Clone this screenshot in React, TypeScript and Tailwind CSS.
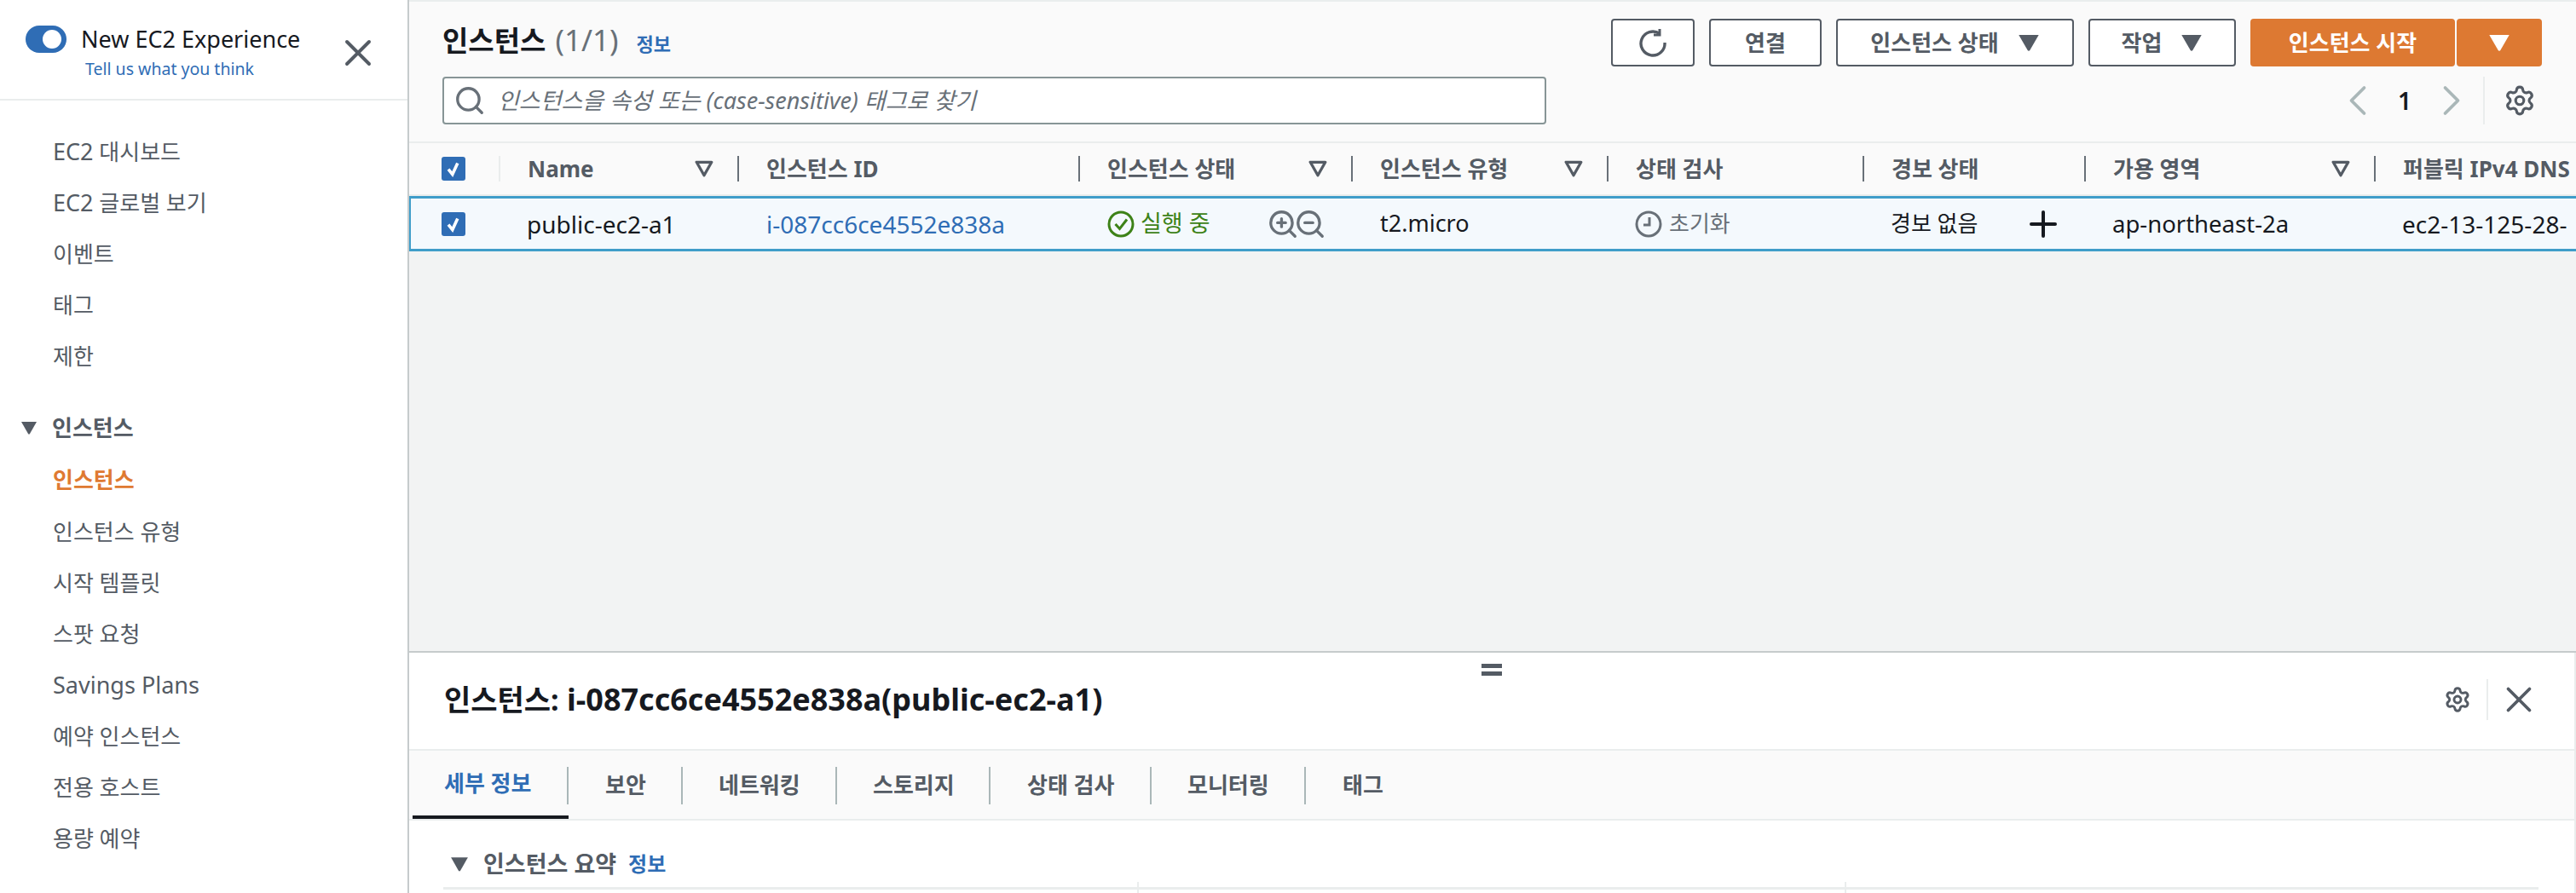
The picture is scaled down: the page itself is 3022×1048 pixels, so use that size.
import type { ReactNode } from "react";
import { Search, Settings, ZoomIn, ZoomOut, X, ChevronLeft, ChevronRight, Plus } from "lucide-react";

const font = "font-['Noto_Sans','Noto_Sans_CJK_KR',sans-serif]";

const Caret = ({ className = "" }: { className?: string }) => (
  <svg viewBox="0 0 20 20" className={className} fill="currentColor">
    <path d="M1 3h18l-8 14a1.2 1.2 0 0 1-2 0z" />
  </svg>
);

const SortIcon = () => (
  <svg viewBox="0 0 20 20" className="w-[22px] h-[22px] text-[#545b64]" fill="none" stroke="currentColor" strokeWidth="3" strokeLinejoin="round">
    <path d="M2 3h16l-8 14z" />
  </svg>
);

const Checkbox = () => (
  <div className="w-[28px] h-[28px] rounded-[3px] bg-[#2f6db5] flex items-center justify-center">
    <svg viewBox="0 0 20 20" className="w-[24px] h-[24px]" fill="none" stroke="white" strokeWidth="3">
      <path d="M5 10.5l4 5 5-11" />
    </svg>
  </div>
);

const NavItem = ({ children }: { children: ReactNode }) => (
  <div className="h-[60px] pl-[62px] flex items-center whitespace-pre">{children}</div>
);

const HeaderCell = ({ label, sort, first }: { label: string; sort?: boolean; first?: boolean }) => (
  <div className="flex items-center h-full min-w-0">
    <span className={`w-[2px] h-[30px] shrink-0 ${first ? "bg-[#eaeded]" : "bg-[#687078]"}`} />
    <span className="ml-[32px] whitespace-nowrap">{label}</span>
    {sort && (
      <span className="ml-auto mr-[28px] flex">
        <SortIcon />
      </span>
    )}
  </div>
);

const ActionButton = ({ label, caret, width }: { label: string; caret?: boolean; width: string }) => (
  <button className={`${width} h-[56px] border-2 border-[#545b64] rounded-[4px] bg-white text-[#545b64] font-bold text-[26px] flex items-center justify-center gap-[22px]`}>
    <span>{label}</span>
    {caret && <Caret className="w-[26px] h-[26px]" />}
  </button>
);

const tabs = [
  { label: "세부 정보", w: "w-[183px] pl-[37px]" },
  { label: "보안", w: "w-[134px] pl-[43px]" },
  { label: "네트워킹", w: "w-[181px] pl-[42px]" },
  { label: "스토리지", w: "w-[180px] pl-[42px]" },
  { label: "상태 검사", w: "w-[189px] pl-[43px]" },
  { label: "모니터링", w: "w-[181px] pl-[42px]" },
  { label: "태그", w: "w-[130px] pl-[43px]" },
];

export default function App() {
  return (
    <div className={`${font} flex w-[3022px] h-[1048px] overflow-hidden bg-white text-[#16191f]`}>
      {/* left nav */}
      <aside className="w-[480px] shrink-0 border-r-2 border-[#c6cbcc] bg-white">
        <div className="h-[118px] border-b-2 border-[#eaeded] flex pl-[30px] pr-[32px]">
          <div className="mt-[30px] w-[48px] h-[32px] rounded-full bg-[#2f6db5] relative shrink-0">
            <div className="absolute left-[20px] top-[5px] w-[22px] h-[22px] rounded-full bg-white" />
          </div>
          <div className="ml-[17px] pt-[24px]">
            <div className="text-[27px] leading-[44px] text-[#16191f]">New EC2 Experience</div>
            <div className="ml-[5px] text-[19.5px] leading-[26px] text-[#2f6db5]">Tell us what you think</div>
          </div>
          <X className="ml-auto mt-[36px] w-[52px] h-[52px] text-[#545b64]" strokeWidth={1.8} />
        </div>
        <nav className="pt-[30px] text-[#545b64] text-[26px]">
          <NavItem><span className="text-[27px]">EC2</span> 대시보드</NavItem>
          <NavItem><span className="text-[27px]">EC2</span> 글로벌 보기</NavItem>
          <NavItem>이벤트</NavItem>
          <NavItem>태그</NavItem>
          <NavItem>제한</NavItem>
          <div className="mt-[24px] h-[60px] flex items-center pl-[24px] font-bold">
            <Caret className="w-[20px] h-[20px] mr-[17px]" />
            인스턴스
          </div>
          <div className="h-[62px] pl-[62px] flex items-center font-bold text-[#df7a32]">인스턴스</div>
          <NavItem>인스턴스 유형</NavItem>
          <NavItem>시작 템플릿</NavItem>
          <NavItem>스팟 요청</NavItem>
          <NavItem><span className="text-[27px]">Savings Plans</span></NavItem>
          <NavItem>예약 인스턴스</NavItem>
          <NavItem>전용 호스트</NavItem>
          <NavItem>용량 예약</NavItem>
        </nav>
      </aside>

      <main className="flex-1 min-w-0 flex flex-col">
        {/* instances list */}
        <section className="h-[766px] shrink-0 bg-[#f2f3f3] border-b-2 border-[#c6cbcc] flex flex-col">
          <div className="h-[168px] shrink-0 bg-[#fafafa] border-t-2 border-[#eaeded] border-b-2 border-b-[#eaeded] pl-[39px] pr-[40px]">
            <div className="flex items-center justify-between pt-[20px]">
              <div className="flex items-baseline -mt-[6px]">
                <h1 className="text-[33px] font-bold">인스턴스</h1>
                <span className="ml-[11px] text-[35px] text-[#687078]">(1/1)</span>
                <span className="ml-[21px] text-[22px] font-bold text-[#2f6db5]">정보</span>
              </div>
              <div className="flex gap-[17px]">
                <button className="w-[98px] h-[56px] border-2 border-[#545b64] rounded-[4px] bg-white flex items-center justify-center">
                  <svg viewBox="0 0 34 34" className="w-[34px] h-[34px] text-[#545b64]" fill="none" stroke="currentColor" strokeWidth="3.4">
                    <path d="M25 6.5A14 14 0 1 0 31 17" />
                    <path d="M25 1v7h-7" strokeWidth="3" />
                  </svg>
                </button>
                <ActionButton label="연결" width="w-[132px]" />
                <ActionButton label="인스턴스 상태" caret width="w-[279px]" />
                <ActionButton label="작업" caret width="w-[173px]" />
                <div className="flex gap-[2px]">
                  <button className="w-[240px] h-[56px] rounded-[4px] bg-[#dd7932] text-white font-bold text-[26px]">인스턴스 시작</button>
                  <button className="w-[100px] h-[56px] rounded-[4px] bg-[#dd7932] text-white flex items-center justify-center">
                    <Caret className="w-[26px] h-[26px]" />
                  </button>
                </div>
              </div>
            </div>
            <div className="flex items-center justify-between mt-[12px]">
              <div className="w-[1295px] h-[56px] bg-white border-2 border-[#879596] rounded-[4px] flex items-center pl-[11px]">
                <Search className="w-[38px] h-[38px] text-[#687078]" strokeWidth={2.1} />
                <span className="ml-[14px] italic text-[27px] text-[#687078]">인스턴스을 속성 또는 (case-sensitive) 태그로 찾기</span>
              </div>
              <div className="flex items-center h-[56px]">
                <ChevronLeft className="w-[60px] h-[60px] text-[#aab7b8]" strokeWidth={1.5} />
                <span className="mx-[17px] w-[16px] text-center text-[28px] font-semibold">1</span>
                <ChevronRight className="w-[60px] h-[60px] text-[#aab7b8]" strokeWidth={1.5} />
                <span className="ml-[7px] w-[2px] h-[56px] bg-[#eaeded]" />
                <Settings className="ml-[22px] mr-[7px] w-[38px] h-[38px] text-[#545b64]" strokeWidth={2} />
              </div>
            </div>
          </div>

          {/* table */}
          <div className="grid grid-cols-[105px_280px_400px_320px_300px_300px_260px_340px_237px] h-[60px] items-center bg-[#fafafa] text-[#545b64] font-bold text-[26px] overflow-hidden">
            <div className="pl-[38px]"><Checkbox /></div>
            <HeaderCell label="Name" sort first />
            <HeaderCell label="인스턴스 ID" />
            <HeaderCell label="인스턴스 상태" sort />
            <HeaderCell label="인스턴스 유형" sort />
            <HeaderCell label="상태 검사" />
            <HeaderCell label="경보 상태" />
            <HeaderCell label="가용 영역" sort />
            <HeaderCell label="퍼블릭 IPv4 DNS" />
          </div>
          <div className="h-[2px] bg-[#eaeded]" />
          <div className="grid grid-cols-[103px_280px_400px_320px_300px_300px_260px_340px_237px] h-[65px] items-center bg-[#f4f9fd] border-y-[3px] border-[#3f9dc9] border-l-2 text-[28px] overflow-hidden whitespace-nowrap">
            <div className="pl-[36px]"><Checkbox /></div>
            <div className="pl-[33px]">public-ec2-a1</div>
            <div className="pl-[34px] text-[#2f6db5]">i-087cc6ce4552e838a</div>
            <div className="pl-[34px] flex items-center">
              <svg viewBox="0 0 32 32" className="w-[32px] h-[32px] text-[#3d8217]" fill="none" stroke="currentColor" strokeWidth="3">
                <circle cx="16" cy="16" r="14" />
                <path d="M9.5 16l5 5.5 8.5-11" />
              </svg>
              <span className="ml-[7px] text-[27px] text-[#3d8217]">실행 중</span>
              <span className="ml-auto mr-[29px] flex text-[#687078]">
                <ZoomIn className="w-[38px] h-[38px] -mr-[6px]" strokeWidth={2.1} />
                <ZoomOut className="w-[38px] h-[38px]" strokeWidth={2.1} />
              </span>
            </div>
            <div className="pl-[34px] text-[27px]">t2.micro</div>
            <div className="pl-[33px] flex items-center text-[#687078]">
              <svg viewBox="0 0 32 32" className="w-[32px] h-[32px]" fill="none" stroke="currentColor" strokeWidth="3">
                <circle cx="16" cy="16" r="14" />
                <path d="M17 8v9h-7" />
              </svg>
              <span className="ml-[8px] text-[26px]">초기화</span>
            </div>
            <div className="pl-[33px] flex items-center text-[26px]">
              경보 없음
              <Plus className="ml-[53px] w-[48px] h-[48px]" strokeWidth={2} />
            </div>
            <div className="pl-[33px] text-[27.5px]">ap-northeast-2a</div>
            <div className="pl-[33px]">ec2-13-125-28-</div>
          </div>
        </section>

        {/* details panel */}
        <section className="flex-1 min-h-0 bg-white border-r-2 border-[#eaeded] relative">
          <div className="absolute left-[1258px] top-[13px] w-[24px] h-[14px] border-y-[5px] border-[#545b64]" />
          <div className="h-[115px] border-b-2 border-[#eaeded] flex items-center pl-[41px] pr-[40px] pb-[3px]">
            <h2 className="text-[36px] font-bold">
              <span className="text-[34px]">인스턴스:</span> i-087cc6ce4552e838a(public-ec2-a1)
            </h2>
            <Settings className="ml-auto w-[32px] h-[32px] text-[#545b64]" strokeWidth={2.2} />
            <span className="ml-[18px] w-[2px] h-[48px] bg-[#eaeded]" />
            <X className="ml-[11px] w-[50px] h-[50px] text-[#545b64]" strokeWidth={1.8} />
          </div>
          <div className="h-[82px] bg-[#fafafa] border-b-2 border-[#eaeded] flex pl-[4px]">
            {tabs.map((tab, i) => (
              <div key={tab.label} className={`${tab.w} h-[80px] flex items-center font-bold text-[26px] relative ${i === 0 ? "text-[#2f6db5] border-b-[4px] border-[#16191f]" : "text-[#545b64]"}`}>
                <span>{tab.label}</span>
                {i < tabs.length - 1 && <span className="absolute right-0 top-[19px] w-[2px] h-[44px] bg-[#aab7b8]" />}
              </div>
            ))}
          </div>
          <div className="pl-[40px] pr-[42px] pt-[33px]">
            <div className="flex items-center h-[36px]">
              <Caret className="ml-[8px] w-[22px] h-[22px] text-[#545b64]" />
              <span className="ml-[17px] font-bold text-[27px] text-[#545b64]">인스턴스 요약</span>
              <span className="ml-[14px] font-bold text-[24px] text-[#2f6db5]">정보</span>
            </div>
            <div className="mt-[9px] h-[3px] bg-[#eaeded] grid grid-cols-[814px_830px_1fr]">
              <span className="col-start-2 h-[16px] -mt-[6px] border-l-2 border-[#eaeded]" />
              <span className="h-[16px] -mt-[6px] border-l-2 border-[#eaeded]" />
            </div>
          </div>
        </section>
      </main>
    </div>
  );
}
